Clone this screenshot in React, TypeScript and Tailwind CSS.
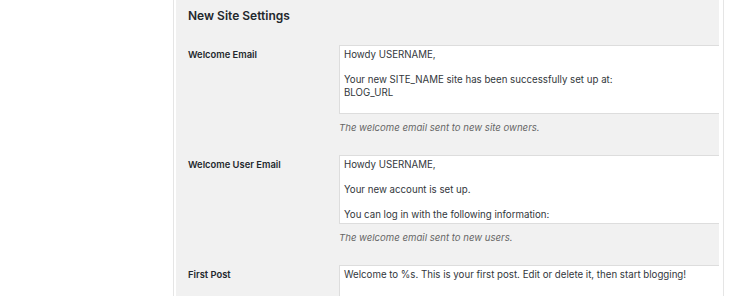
import React from 'react';

const rows = [
  {
    label: 'Welcome Email',
    lines: ['Howdy USERNAME,', '', 'Your new SITE_NAME site has been successfully set up at:', 'BLOG_URL'],
    note: 'The welcome email sent to new site owners.',
  },
  {
    label: 'Welcome User Email',
    lines: ['Howdy USERNAME,', '', 'Your new account is set up.', '', 'You can log in with the following information:'],
    note: 'The welcome email sent to new users.',
  },
  {
    label: 'First Post',
    lines: ['Welcome to %s. This is your first post. Edit or delete it, then start blogging!'],
    note: '',
  },
];

function Field({ lines }: { lines: string[] }) {
  return (
    <div className="h-[69px] overflow-hidden border border-r-0 border-[#dddddd] bg-white pl-[4px] pt-[2px] text-[9.7px] leading-[13px] text-[#32373c]">
      {lines.map((line, i) =>
        line ? <div key={i}>{line}</div> : <div key={i} className="h-[12px]" />
      )}
    </div>
  );
}

export default function App() {
  return (
    <div className="flex h-[296px] w-[750px] overflow-hidden bg-white font-['Inter',sans-serif]">
      <div className="w-[174px] shrink-0 border-r border-[#e5e5e5]" />
      <div className="w-[2px] shrink-0" />
      <div className="w-[543px] shrink-0 bg-[#f1f1f1] pl-3">
        <h2 className="pt-[9px] text-[12px] font-semibold leading-[14px] text-[#23282d]">New Site Settings</h2>
        <div className="mt-[22px] flex flex-col">
          {rows.map((row) => (
            <div key={row.label} className="flex">
              <div className="w-[151px] shrink-0 pt-[3px] text-[9.4px] font-semibold leading-[13px] text-[#23282d]">
                {row.label}
              </div>
              <div className="w-[380px] shrink-0">
                <Field lines={row.lines} />
                {row.note && (
                  <p className="mb-[21px] mt-[7px] text-[9.6px] italic leading-[13px] text-[#666666]">{row.note}</p>
                )}
              </div>
            </div>
          ))}
        </div>
      </div>
      <div className="w-[4px] shrink-0" />
      <div className="w-[1px] shrink-0 bg-[#e5e5e5]" />
    </div>
  );
}
